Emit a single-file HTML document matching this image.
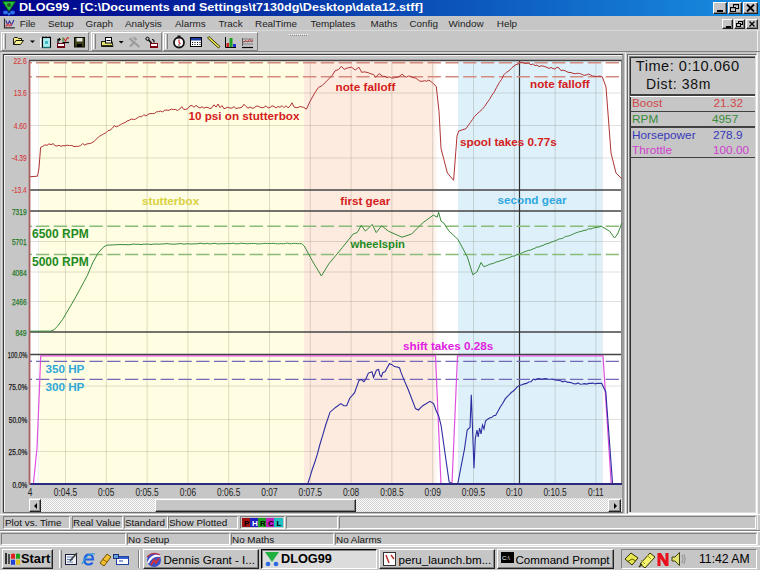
<!DOCTYPE html>
<html><head><meta charset="utf-8">
<style>
*{box-sizing:border-box}
html,body{margin:0;padding:0;width:760px;height:570px;overflow:hidden;background:#c6c6c6;font-family:"Liberation Sans",sans-serif;}
.a{position:absolute}
.t{position:absolute;white-space:pre;line-height:1}
.menu{font-size:9.9px;color:#222;top:19px}
.btn{position:absolute;background:#c6c6c6;border-top:1px solid #fff;border-left:1px solid #fff;border-right:1px solid #222;border-bottom:1px solid #222;box-shadow:inset -1px -1px 0 #808080}
.sunk{position:absolute;border-top:1px solid #808080;border-left:1px solid #808080;border-right:1px solid #fff;border-bottom:1px solid #fff}
.st{font-size:9.9px;color:#111}
svg text{font-family:"Liberation Sans",sans-serif}
</style></head><body>
<div class="a" style="left:0;top:0;width:760px;height:16px;background:linear-gradient(90deg,#00008a 0%,#0638a8 40%,#188ee0 100%)"></div>
<div class="t" style="left:19px;top:2px;font-size:11.8px;font-weight:bold;color:#fff;transform:scaleX(1.064);transform-origin:0 0">DLOG99 - [C:\Documents and Settings\t7130dg\Desktop\data12.stff]</div>
<svg class="a" style="left:1px;top:0px" width="16" height="16" viewBox="0 0 16 16"><path d="M1.5 1.5H14.5L8 11.5Z" fill="#22c23a" stroke="#0a5a1a" stroke-width="1"/><circle cx="8" cy="5" r="2" fill="#2a5a2a"/><ellipse cx="4.5" cy="12.5" rx="2.5" ry="2" fill="#2a70e8"/><ellipse cx="11.5" cy="12.5" rx="2.5" ry="2" fill="#2a70e8"/><circle cx="8" cy="14" r="1.5" fill="#2a70e8"/></svg>
<div class="btn" style="left:713px;top:2px;width:14px;height:12px"><div class="a" style="left:3px;top:7px;width:6px;height:2px;background:#000"></div></div>
<div class="btn" style="left:728px;top:2px;width:14px;height:12px"><svg class="a" style="left:0;top:0" width="12" height="10"><rect x="4.5" y="1.5" width="5" height="4" fill="none" stroke="#000"/><path d="M4 1h6v1.2h-6z" fill="#000"/><rect x="1.5" y="4.5" width="5" height="4" fill="#c6c6c6" stroke="#000"/><path d="M1 4h6v1.2h-6z" fill="#000"/></svg></div>
<div class="btn" style="left:743px;top:2px;width:15px;height:12px"><svg class="a" style="left:0;top:0" width="13" height="10"><path d="M3 1.5l7 7M10 1.5l-7 7" stroke="#000" stroke-width="1.8"/></svg></div>
<!-- menu -->
<svg class="a" style="left:0;top:16px" width="18" height="14" viewBox="0 16 18 14"><path d="M4.5 18.5V27.8H14.8" stroke="#303030" stroke-width="1.2" fill="none"/><path d="M6 20.5l1.5 4.5 2-4 2 4 2.5-5" stroke="#3038a8" stroke-width="1.2" fill="none"/><path d="M5.8 26.5l2-2.5 1.8 2 2-2.5" stroke="#e04848" stroke-width="1.3" fill="none"/></svg>
<div class="t menu" style="left:19.7px">File</div>
<div class="t menu" style="left:48px">Setup</div>
<div class="t menu" style="left:85.5px">Graph</div>
<div class="t menu" style="left:125px">Analysis</div>
<div class="t menu" style="left:175px">Alarms</div>
<div class="t menu" style="left:218.4px">Track</div>
<div class="t menu" style="left:255px">RealTime</div>
<div class="t menu" style="left:310.5px">Templates</div>
<div class="t menu" style="left:370.5px">Maths</div>
<div class="t menu" style="left:409.4px">Config</div>
<div class="t menu" style="left:448.5px">Window</div>
<div class="t menu" style="left:496.8px">Help</div>
<div class="btn" style="left:722px;top:19px;width:11px;height:10px"><div class="a" style="left:3px;top:6px;width:5px;height:2px;background:#000"></div></div>
<div class="btn" style="left:734px;top:19px;width:11px;height:10px"><svg class="a" style="left:0;top:0" width="9" height="8"><rect x="3.5" y="1.5" width="4" height="3" fill="none" stroke="#000"/><path d="M3 1h5v1h-5z" fill="#000"/><rect x="1.5" y="3.5" width="4" height="3" fill="#c6c6c6" stroke="#000"/><path d="M1 3h5v1h-5z" fill="#000"/></svg></div>
<div class="btn" style="left:746px;top:19px;width:12px;height:10px"><svg class="a" style="left:0;top:0" width="10" height="8"><path d="M2.5 1.5l5 5M7.5 1.5l-5 5" stroke="#000" stroke-width="1.3"/></svg></div>
<!-- toolbar -->
<div class="a" style="left:0;top:30px;width:760px;height:1px;background:#d8d8d8"></div><div class="a" style="left:757px;top:30px;width:1px;height:516px;background:#f0f0f0"></div><svg class="a" style="left:289px;top:33px" width="19" height="3"><path d="M0 1.5h19" stroke="#f4f4f4" stroke-dasharray="1 1"/><path d="M1 2.5h18" stroke="#909090" stroke-dasharray="1 1"/></svg>
<div class="a" style="left:0;top:51px;width:760px;height:1px;background:#808080"></div>
<div class="a" style="left:1px;top:32px;width:88px;height:19px;border-top:1px solid #fff;border-left:1px solid #fff;border-right:1px solid #808080;border-bottom:1px solid #808080"></div>
<div class="a" style="left:91px;top:32px;width:71px;height:19px;border-top:1px solid #fff;border-left:1px solid #fff;border-right:1px solid #808080;border-bottom:1px solid #808080"></div>
<div class="a" style="left:163px;top:32px;width:95px;height:19px;border-top:1px solid #fff;border-left:1px solid #fff;border-right:1px solid #808080;border-bottom:1px solid #808080"></div>
<div class="a" style="left:3px;top:34px;width:3px;height:15px;border-left:1px solid #fff;border-right:1px solid #808080"></div>
<div class="a" style="left:93px;top:34px;width:3px;height:15px;border-left:1px solid #fff;border-right:1px solid #808080"></div>
<div class="a" style="left:165px;top:34px;width:3px;height:15px;border-left:1px solid #fff;border-right:1px solid #808080"></div>
<svg class="a" style="left:0;top:30px" width="260" height="22" viewBox="0 30 260 22">
 <path d="M13.5 44.5v-6l1-1h3l1 1h3v2.5" fill="#f4ec80" stroke="#000" stroke-width="0.9"/><path d="M13.5 44.5l2.5-4h7.5l-3 4z" fill="#f8f490" stroke="#000" stroke-width="0.9"/>
 <path d="M30 40.5h5l-2.5 2.5z" fill="#000"/>
 <path d="M40.5 38v9" stroke="#fff"/><rect x="42.5" y="37.5" width="8" height="10" fill="#a8eef0" stroke="#000" stroke-width="1.1"/><path d="M42.5 47.5h8" stroke="#1c7070" stroke-width="1.2"/><path d="M43 36.5v1.5M46 36.5v1.5M49.5 36.5v1.5" stroke="#000" stroke-width="1.4"/><rect x="45" y="41" width="3" height="3" fill="#40b8c0"/>
 <rect x="57.5" y="43.5" width="7" height="4" fill="#fff" stroke="#700010"/><rect x="58" y="46" width="6" height="1.5" fill="#700010"/><path d="M58 43V39.5h2" stroke="#000" stroke-width="1.3" fill="none"/><path d="M59 37.5l2 2-2 1.5z" fill="#000"/><path d="M62.5 42.5h6.5" stroke="#000" stroke-width="1.2"/><path d="M63 41.5v-4" stroke="#40a040" stroke-width="1.5"/><path d="M63.5 38l2 3 2-3.5 1.5 1" stroke="#d03030" fill="none" stroke-width="1.1"/>
 <rect x="74.5" y="37.5" width="10" height="9.5" fill="#404018" stroke="#101000"/><rect x="76.5" y="38" width="6" height="3.5" fill="#e4e4e4"/><rect x="77" y="44" width="5" height="3" fill="#000"/>
 <path d="M101.5 41.5h10.5l1 5h-11.5z" fill="#e8e470" stroke="#000" stroke-width="0.9"/><rect x="105.5" y="37.5" width="6" height="5.5" fill="#fff" stroke="#000"/><path d="M106.5 40.5h4" stroke="#000"/><path d="M102 45.5h10" stroke="#000" stroke-width="0.8"/>
 <path d="M118.7 41h5l-2.5 2.5z" fill="#000"/>
 <path d="M129.5 38.5l10 8.5M130 46.5l5-5M134 37.5l2.5 2.5" stroke="#9a9a9a" stroke-width="2"/><path d="M131 37l3 3" stroke="#b8b8b8" stroke-width="2"/>
 <circle cx="147.5" cy="38.8" r="1.6" fill="none" stroke="#000" stroke-width="1"/><path d="M148.5 40l3 3" stroke="#000" stroke-width="1.4"/><path d="M152 39.5q2.5 0 2 3" stroke="#000" stroke-width="1.2" fill="none"/><rect x="150.5" y="43.5" width="7" height="4" fill="#fff" stroke="#800010"/><rect x="151" y="46" width="6" height="1.5" fill="#800010"/>
 <circle cx="179" cy="42.5" r="5" fill="#fff" stroke="#111" stroke-width="1.8"/><path d="M179 42.5v-3M179 42.5l1.5 1.5" stroke="#d02020" stroke-width="1.2"/><rect x="177.5" y="35.5" width="3" height="1.8" fill="#111"/><circle cx="179" cy="45" r="0.7" fill="#000"/>
 <rect x="190.5" y="37.5" width="11" height="9" fill="#fff" stroke="#000"/><rect x="191" y="38" width="10" height="2.5" fill="#1a3aa0"/><path d="M192 42.5h1M194.5 42.5h1M197 42.5h1M199.5 42.5h1M192 44.5h1M194.5 44.5h1M197 44.5h1M199.5 44.5h1" stroke="#000" stroke-width="1.2"/>
 <path d="M207.5 38l1.5-1.5 11 10-1.5 1.5z" fill="#f0ec40" stroke="#202000" stroke-width="0.9"/>
 <path d="M225.5 37v10.5h10.5" stroke="#000" fill="none"/><rect x="226.5" y="43" width="2.5" height="4" fill="#d02020"/><rect x="229.5" y="38" width="3" height="9" fill="#20a020"/><rect x="233" y="44" width="3" height="3" fill="#2030d0"/>
 <path d="M242 47.5h11" stroke="#000" stroke-width="1.2"/><path d="M242.5 38v8" stroke="#404040" stroke-width="0.8"/><path d="M243 39h10M243 41.5h10M243 44h10" stroke="#707070" stroke-width="0.8"/><path d="M243.5 42.5l2-2 2 1.5 2-2.5 2 1.5 1.5-1" stroke="#d03030" fill="none" stroke-width="0.9"/>
</svg>
<svg class="a" style="left:0;top:0" width="760" height="570" viewBox="0 0 760 570">
<path d="M1.5 514V52.5H626" fill="none" stroke="#dadada" stroke-width="1"/>
<path d="M3.5 512.5V54.5H623" fill="none" stroke="#3a3a3a" stroke-width="1.2"/>
<path d="M4.5 512V55.5H622.5" fill="none" stroke="#f4f4f4" stroke-width="1"/>
<path d="M3 512.5H623V54.5" fill="none" stroke="#707070" stroke-width="1"/>
<path d="M2 514.5H625.5V53" fill="none" stroke="#f8f8f8" stroke-width="1"/>
<defs><linearGradient id="wy" x1="0" x2="1"><stop offset="0" stop-color="#fff"/><stop offset="1" stop-color="#fffde2"/></linearGradient></defs>
<rect x="29" y="61" width="9.5" height="423" fill="#fff"/>
<rect x="38.5" y="61" width="2.5" height="423" fill="url(#wy)"/>
<rect x="41" y="61" width="263" height="423" fill="#fffde2"/>
<defs><linearGradient id="pw" x1="0" x2="1"><stop offset="0" stop-color="#fdebdf"/><stop offset="1" stop-color="#fff"/></linearGradient></defs>
<rect x="304" y="61" width="128.5" height="423" fill="#fdebdf"/>
<rect x="432.5" y="61" width="25.5" height="423" fill="#ffffff"/>
<rect x="432.5" y="61" width="5.5" height="423" fill="url(#pw)"/>
<rect x="458" y="61" width="144.5" height="423" fill="#def0fa"/>
<rect x="602.5" y="61" width="19.5" height="423" fill="#ffffff"/>
<line x1="65.5" y1="61" x2="65.5" y2="484" stroke="rgba(70,60,30,0.17)" stroke-width="1"/>
<line x1="106.3" y1="61" x2="106.3" y2="484" stroke="rgba(70,60,30,0.17)" stroke-width="1"/>
<line x1="147.1" y1="61" x2="147.1" y2="484" stroke="rgba(70,60,30,0.17)" stroke-width="1"/>
<line x1="187.9" y1="61" x2="187.9" y2="484" stroke="rgba(70,60,30,0.17)" stroke-width="1"/>
<line x1="228.7" y1="61" x2="228.7" y2="484" stroke="rgba(70,60,30,0.17)" stroke-width="1"/>
<line x1="269.5" y1="61" x2="269.5" y2="484" stroke="rgba(70,60,30,0.17)" stroke-width="1"/>
<line x1="310.3" y1="61" x2="310.3" y2="484" stroke="rgba(70,60,30,0.17)" stroke-width="1"/>
<line x1="351.1" y1="61" x2="351.1" y2="484" stroke="rgba(70,60,30,0.17)" stroke-width="1"/>
<line x1="391.9" y1="61" x2="391.9" y2="484" stroke="rgba(70,60,30,0.17)" stroke-width="1"/>
<line x1="432.7" y1="61" x2="432.7" y2="484" stroke="rgba(70,60,30,0.17)" stroke-width="1"/>
<line x1="473.5" y1="61" x2="473.5" y2="484" stroke="rgba(70,60,30,0.17)" stroke-width="1"/>
<line x1="514.3" y1="61" x2="514.3" y2="484" stroke="rgba(70,60,30,0.17)" stroke-width="1"/>
<line x1="555.1" y1="61" x2="555.1" y2="484" stroke="rgba(70,60,30,0.17)" stroke-width="1"/>
<line x1="595.9" y1="61" x2="595.9" y2="484" stroke="rgba(70,60,30,0.17)" stroke-width="1"/>
<line x1="29" y1="93" x2="622" y2="93" stroke="rgba(70,60,30,0.16)" stroke-width="1"/>
<line x1="29" y1="125.5" x2="622" y2="125.5" stroke="rgba(70,60,30,0.16)" stroke-width="1"/>
<line x1="29" y1="158" x2="622" y2="158" stroke="rgba(70,60,30,0.16)" stroke-width="1"/>
<line x1="29" y1="241.5" x2="622" y2="241.5" stroke="rgba(70,60,30,0.16)" stroke-width="1"/>
<line x1="29" y1="272" x2="622" y2="272" stroke="rgba(70,60,30,0.16)" stroke-width="1"/>
<line x1="29" y1="301.5" x2="622" y2="301.5" stroke="rgba(70,60,30,0.16)" stroke-width="1"/>
<line x1="29" y1="386" x2="622" y2="386" stroke="rgba(70,60,30,0.16)" stroke-width="1"/>
<line x1="29" y1="419.5" x2="622" y2="419.5" stroke="rgba(70,60,30,0.16)" stroke-width="1"/>
<line x1="29" y1="451.5" x2="622" y2="451.5" stroke="rgba(70,60,30,0.16)" stroke-width="1"/>
<line x1="29" y1="60.6" x2="622" y2="60.6" stroke="#444" stroke-width="1.5"/>
<line x1="29" y1="190" x2="622" y2="190" stroke="#444" stroke-width="1.5"/>
<line x1="29" y1="211" x2="622" y2="211" stroke="#444" stroke-width="1.5"/>
<line x1="29" y1="332" x2="622" y2="332" stroke="#444" stroke-width="1.5"/>
<line x1="29" y1="354.5" x2="622" y2="354.5" stroke="#444" stroke-width="1.5"/>
<line x1="621.5" y1="60.6" x2="621.5" y2="484" stroke="#8a8a8a" stroke-width="1"/>
<line x1="519.5" y1="61" x2="519.5" y2="484" stroke="#303030" stroke-width="1.2"/>
<g stroke-dasharray="13.3 4.5" stroke-width="1.45" fill="none">
<line x1="36" y1="62.7" x2="622" y2="62.7" stroke="#d58a80"/>
<line x1="36" y1="76.8" x2="622" y2="76.8" stroke="#d58a80"/>
<line x1="36" y1="226.3" x2="622" y2="226.3" stroke="#88bc78"/>
<line x1="36" y1="254.4" x2="622" y2="254.4" stroke="#88bc78"/>
<line x1="36" y1="361.3" x2="622" y2="361.3" stroke="#7468b8" stroke-width="1.3"/>
<line x1="36" y1="379.3" x2="622" y2="379.3" stroke="#7468b8" stroke-width="1.3"/>
</g>
<line x1="29" y1="62.7" x2="32" y2="62.7" stroke="#d58a80" stroke-width="1.4"/>
<line x1="29" y1="76.8" x2="32" y2="76.8" stroke="#d58a80" stroke-width="1.4"/>
<line x1="29" y1="226.3" x2="32" y2="226.3" stroke="#88bc78" stroke-width="1.4"/>
<line x1="29" y1="254.4" x2="32" y2="254.4" stroke="#88bc78" stroke-width="1.4"/>
<line x1="29" y1="361.3" x2="32" y2="361.3" stroke="#7468b8" stroke-width="1.4"/>
<line x1="29" y1="379.3" x2="32" y2="379.3" stroke="#7468b8" stroke-width="1.4"/>
<polyline points="29.0,176.8 37.5,176.2 39.0,168.0 40.6,147.4 42.7,146.4 44.9,144.9 47.0,145.3 49.0,143.8 51.0,144.7 53.0,143.6 55.0,145.5 57.0,146.1 59.0,145.2 61.0,146.4 63.0,145.6 65.0,145.8 67.2,145.2 69.5,145.6 71.8,145.4 74.0,146.6 76.2,146.3 78.5,146.3 80.6,145.6 82.7,143.6 84.8,145.0 87.0,143.9 89.1,143.6 91.2,143.2 94.1,141.4 97.0,138.5 99.3,136.4 101.5,135.3 103.8,133.7 105.9,132.8 108.0,130.6 110.1,130.2 112.2,128.4 114.3,125.7 116.4,126.8 118.5,125.9 120.7,124.5 122.8,123.3 124.9,122.7 127.0,121.0 129.1,120.4 131.2,119.0 133.3,119.5 135.4,119.2 137.5,117.8 139.6,116.5 141.7,116.8 143.8,114.6 145.9,116.0 148.0,114.4 150.1,113.5 152.2,113.6 154.3,113.5 156.4,111.9 158.5,111.6 160.6,111.1 162.7,111.9 164.8,110.2 166.9,110.1 169.1,110.4 171.2,109.1 173.3,109.5 175.4,109.5 177.5,110.5 179.6,109.2 181.7,106.7 183.8,109.5 185.9,109.4 188.0,108.4 190.0,105.8 192.0,105.5 194.0,107.3 196.0,105.4 198.0,107.0 200.0,108.0 202.0,106.7 204.0,108.2 206.0,107.2 208.0,107.5 210.0,108.7 212.0,107.7 214.0,104.8 216.0,107.1 218.0,104.0 220.0,107.7 222.0,105.5 224.0,108.8 226.0,108.0 228.0,107.1 230.0,108.1 232.0,108.1 234.0,106.6 236.0,108.5 238.0,108.0 240.0,107.8 242.0,107.2 244.0,104.2 246.0,106.5 248.0,108.2 250.0,107.0 252.0,108.1 254.0,108.1 256.0,106.2 258.0,106.1 260.0,107.2 262.0,107.8 264.0,107.3 266.0,105.8 268.0,107.9 270.0,107.5 272.0,105.9 274.0,106.3 276.0,108.0 278.0,106.5 280.0,107.3 282.0,105.7 284.0,107.7 286.0,105.7 288.0,107.9 290.0,106.2 292.0,102.8 294.0,106.9 296.0,107.7 298.0,107.5 300.0,106.5 303.7,107.4 306.4,109.2 310.1,101.3 314.7,93.0 318.4,87.5 322.1,85.6 327.6,80.1 332.2,75.5 335.0,70.9 338.7,69.4 341.4,66.3 344.2,69.4 347.0,68.1 351.6,67.2 355.2,70.0 358.9,67.2 361.7,72.4 363.8,71.9 366.0,72.1 368.1,72.7 370.9,73.8 373.7,74.6 375.5,77.3 379.2,73.7 382.9,76.4 385.0,76.4 387.2,77.6 389.4,76.8 391.5,77.9 393.6,78.1 395.8,77.3 397.9,77.2 400.0,76.0 402.1,74.1 404.2,76.1 406.3,77.2 408.4,76.1 410.5,76.4 412.8,77.7 415.1,77.8 417.4,79.3 419.7,81.0 422.0,81.4 424.3,80.7 426.6,81.2 428.9,80.1 432.6,82.9 436.3,86.5 439.0,111.4 441.0,148.4 447.4,173.0 453.6,180.3 457.0,136.0 458.7,131.0 466.0,128.7 468.1,125.7 470.3,122.6 472.5,119.4 474.6,116.4 477.1,113.9 479.6,111.7 482.0,109.5 484.5,106.6 486.9,103.0 489.4,99.6 491.9,95.2 494.3,91.9 496.7,87.2 499.1,82.9 501.6,79.3 504.0,74.7 506.0,72.6 508.0,71.4 510.0,69.9 512.0,67.5 514.0,66.0 516.0,64.7 518.0,64.1 520.0,62.4 522.2,62.3 524.4,63.4 526.6,63.3 528.8,63.2 531.0,64.8 533.0,63.8 535.0,65.7 537.0,65.0 539.0,66.7 541.0,65.8 543.0,66.0 545.0,66.7 547.0,67.4 549.0,68.4 551.0,67.5 553.0,68.5 555.0,69.1 557.0,67.1 559.0,67.9 561.0,70.7 563.0,70.2 565.0,70.7 567.0,71.8 569.0,72.5 571.0,72.5 573.0,73.4 575.2,73.7 577.4,73.3 579.5,73.5 581.7,74.2 583.9,75.3 586.1,75.1 588.2,74.0 590.4,74.8 592.6,76.0 595.0,76.3 597.5,76.5 600.0,76.0 602.4,77.0 606.0,87.0 611.0,153.0 616.0,173.0 622.0,179.0" fill="none" stroke="#b03434" stroke-width="1"/>
<polyline points="29.0,331.2 50.5,331.1 54.0,329.8 57.5,326.2 62.8,319.2 75.1,298.2 87.4,275.4 92.6,263.0 97.9,253.4 103.2,247.3 106.7,245.2 119.0,244.6 121.0,244.5 123.0,244.7 125.0,244.5 127.0,244.8 129.0,244.7 131.0,244.5 133.0,244.1 135.0,244.2 137.0,244.3 139.0,244.2 141.0,244.6 143.0,244.2 145.0,244.2 147.0,244.1 149.0,244.2 151.0,244.5 153.0,244.1 155.0,244.1 157.0,244.0 159.0,244.2 161.0,244.0 163.0,243.9 165.0,243.9 167.0,243.5 169.0,243.9 171.0,244.1 173.0,244.1 175.0,244.2 177.0,243.9 179.0,243.8 181.0,243.5 183.0,244.1 185.0,244.0 187.0,243.7 189.0,243.9 191.0,244.0 193.0,243.9 195.0,243.8 197.0,243.9 199.0,243.4 201.0,243.2 203.0,243.8 205.0,243.8 207.1,243.3 209.1,243.9 211.1,243.8 213.1,243.5 215.1,243.3 217.1,243.9 219.1,243.9 221.1,243.7 223.1,243.7 225.1,243.8 227.2,243.5 229.2,243.6 231.2,243.6 233.2,243.1 235.2,243.8 237.2,243.8 239.2,243.7 241.2,243.1 243.2,243.5 245.2,243.5 247.2,243.8 249.3,243.6 251.3,243.5 253.3,243.5 255.3,243.5 257.3,243.9 259.3,243.8 261.3,243.8 263.3,243.5 265.3,243.3 267.3,243.6 269.3,243.5 271.4,243.5 273.4,243.3 275.4,243.7 277.4,243.8 279.4,243.8 281.4,243.5 283.4,243.8 285.4,243.5 287.4,243.1 289.4,243.7 291.5,243.7 293.5,243.4 295.5,243.4 297.5,243.7 299.5,243.7 301.5,243.5 304.3,246.0 312.4,261.0 321.4,276.0 328.7,264.0 342.3,247.6 353.2,234.0 357.2,232.6 361.3,225.3 365.4,231.2 372.2,224.4 376.2,232.6 381.7,225.8 388.5,231.2 402.0,237.2 411.6,234.0 422.5,223.0 433.3,215.1 437.2,217.2 438.6,212.3 441.0,221.0 443.9,223.2 448.8,230.9 457.9,239.3 467.4,257.0 472.8,274.8 476.9,272.0 481.0,262.5 483.7,266.6 485.7,266.1 487.8,265.2 489.8,264.2 491.9,263.8 493.9,263.2 495.9,262.1 498.0,261.5 500.0,261.0 502.1,260.2 504.1,259.7 506.2,258.6 508.2,257.9 510.3,257.2 512.3,256.3 514.4,256.0 516.4,254.9 518.5,254.3 520.5,253.8 522.6,252.6 524.6,251.8 526.7,251.0 528.7,250.4 530.7,250.0 532.8,249.0 534.8,248.3 536.9,247.0 538.9,247.0 540.9,246.0 543.0,245.5 545.0,244.3 547.0,243.7 549.1,243.2 551.1,242.1 553.2,241.6 555.2,240.7 557.2,239.9 559.3,238.9 561.3,238.7 563.4,237.9 565.4,236.4 567.5,236.2 569.5,235.7 571.5,234.8 573.6,233.9 575.6,232.9 577.7,232.3 579.7,231.7 581.9,231.2 584.0,230.4 586.2,230.2 588.4,228.8 590.5,229.0 592.7,228.3 594.9,227.6 597.1,227.4 599.2,226.9 601.4,226.3 609.6,231.2 614.5,238.0 617.7,234.0 621.8,223.0" fill="none" stroke="#3a8a3a" stroke-width="1"/>
<polyline points="29,484 33.4,484 37,448 39.5,387 40.7,355.8 435.5,355.8 441,484 452,484 457.5,355.8 603,355.8 611.2,484 622,484" fill="none" stroke="#e050e0" stroke-width="1.2"/>
<polyline points="29.0,484.0 307.7,484.0 310.1,476.6 312.4,469.0 314.8,462.3 317.2,454.7 319.9,444.5 322.6,435.6 326.0,424.0 328.0,418.3 330.0,412.2 335.8,407.2 340.9,403.6 343.8,405.7 346.7,405.7 349.6,398.5 354.6,392.7 359.0,380.4 361.2,379.6 364.0,381.8 366.2,378.2 368.4,373.1 372.0,371.7 373.5,377.5 376.4,370.2 378.6,369.5 380.0,375.3 381.4,376.7 382.9,372.4 385.0,371.7 389.4,363.7 391.6,364.4 394.5,366.6 398.1,367.3 399.6,368.0 401.0,372.4 403.9,379.6 408.3,389.8 415.5,408.6 418.4,410.0 422.8,405.7 430.0,401.4 433.6,403.6 436.5,411.5 438.7,415.9 441.0,425.0 449.1,481.9 453.2,484.0 457.7,484.0 464.5,449.0 467.2,430.0 470.0,427.4 471.3,394.8 474.0,468.2 475.3,438.3 477.0,430.0 478.2,437.0 479.6,428.0 481.0,434.0 482.5,425.0 484.0,429.0 485.5,421.0 487.6,419.2 489.6,418.0 491.6,417.6 493.7,415.7 495.7,415.2 498.1,411.0 500.4,406.7 502.8,403.2 505.2,398.9 507.2,396.6 509.3,394.6 511.3,392.5 513.3,391.0 515.4,389.1 517.4,386.6 519.7,385.4 521.9,384.7 524.2,383.9 526.5,383.4 528.7,382.0 531.0,381.7 533.3,379.1 535.5,379.8 537.8,378.5 539.8,378.9 541.9,379.3 543.9,378.7 546.0,378.5 548.0,379.2 550.0,379.3 552.1,379.1 554.1,379.8 556.3,380.1 558.5,380.2 560.6,380.7 562.8,381.8 565.0,381.0 567.2,382.1 569.4,382.4 571.5,382.7 573.7,383.8 575.9,383.9 578.0,382.9 580.2,384.2 582.4,384.0 584.5,383.6 586.6,384.1 588.8,383.4 591.0,383.4 593.1,383.1 595.2,383.9 597.4,383.3 599.6,383.4 601.7,383.4 605.8,392.0 612.6,484.0 622.0,484.0" fill="none" stroke="#2c2ca0" stroke-width="1.1"/>
<line x1="29" y1="484" x2="622" y2="484" stroke="#2a2a80" stroke-width="2"/>
<line x1="29.5" y1="61" x2="29.5" y2="485" stroke="#a86060" stroke-width="1.8"/>
<text x="13.5" y="64.3" fill="#d83838" stroke="#d83838" stroke-width="0.1" font-size="8.5" textLength="13.2" lengthAdjust="spacingAndGlyphs">22.6</text>
<text x="13.7" y="96.3" fill="#d83838" stroke="#d83838" stroke-width="0.1" font-size="8.5" textLength="13" lengthAdjust="spacingAndGlyphs">13.6</text>
<text x="13.7" y="128.8" fill="#d83838" stroke="#d83838" stroke-width="0.1" font-size="8.5" textLength="13" lengthAdjust="spacingAndGlyphs">4.60</text>
<text x="11.7" y="161.3" fill="#d83838" stroke="#d83838" stroke-width="0.1" font-size="8.5" textLength="15" lengthAdjust="spacingAndGlyphs">-4.39</text>
<text x="11.7" y="193.3" fill="#d83838" stroke="#d83838" stroke-width="0.1" font-size="8.5" textLength="15" lengthAdjust="spacingAndGlyphs">-13.4</text>
<text x="11.900000000000002" y="214.8" fill="#287a28" stroke="#287a28" stroke-width="0.25" font-size="8.5" textLength="14.7" lengthAdjust="spacingAndGlyphs">7319</text>
<text x="11.900000000000002" y="245.3" fill="#287a28" stroke="#287a28" stroke-width="0.25" font-size="8.5" textLength="14.7" lengthAdjust="spacingAndGlyphs">5701</text>
<text x="11.900000000000002" y="275.8" fill="#287a28" stroke="#287a28" stroke-width="0.25" font-size="8.5" textLength="14.7" lengthAdjust="spacingAndGlyphs">4084</text>
<text x="11.900000000000002" y="305.3" fill="#287a28" stroke="#287a28" stroke-width="0.25" font-size="8.5" textLength="14.7" lengthAdjust="spacingAndGlyphs">2466</text>
<text x="15.400000000000002" y="335.8" fill="#287a28" stroke="#287a28" stroke-width="0.25" font-size="8.5" textLength="11.2" lengthAdjust="spacingAndGlyphs">849</text>
<text x="7.800000000000001" y="358.0" fill="#202020" stroke="#202020" stroke-width="0.25" font-size="8.5" textLength="19.5" lengthAdjust="spacingAndGlyphs">100.0%</text>
<text x="8.5" y="389.5" fill="#202020" stroke="#202020" stroke-width="0.25" font-size="8.5" textLength="18.8" lengthAdjust="spacingAndGlyphs">75.0%</text>
<text x="8.8" y="423.0" fill="#202020" stroke="#202020" stroke-width="0.25" font-size="8.5" textLength="18.5" lengthAdjust="spacingAndGlyphs">50.0%</text>
<text x="8.600000000000001" y="455.0" fill="#202020" stroke="#202020" stroke-width="0.25" font-size="8.5" textLength="18.7" lengthAdjust="spacingAndGlyphs">25.0%</text>
<text x="12.5" y="487.5" fill="#202020" stroke="#202020" stroke-width="0.25" font-size="8.5" textLength="14.8" lengthAdjust="spacingAndGlyphs">0.0%</text>
<text x="30" y="496.3" text-anchor="middle" fill="#222" font-size="10.5" transform="translate(30,0) scale(0.8,1) translate(-30,0)">4</text>
<text x="65.5" y="496.3" text-anchor="middle" fill="#222" font-size="10.5" transform="translate(65.5,0) scale(0.8,1) translate(-65.5,0)">0:04.5</text>
<text x="106.3" y="496.3" text-anchor="middle" fill="#222" font-size="10.5" transform="translate(106.3,0) scale(0.8,1) translate(-106.3,0)">0:05</text>
<text x="147.1" y="496.3" text-anchor="middle" fill="#222" font-size="10.5" transform="translate(147.1,0) scale(0.8,1) translate(-147.1,0)">0:05.5</text>
<text x="187.9" y="496.3" text-anchor="middle" fill="#222" font-size="10.5" transform="translate(187.9,0) scale(0.8,1) translate(-187.9,0)">0:06</text>
<text x="228.7" y="496.3" text-anchor="middle" fill="#222" font-size="10.5" transform="translate(228.7,0) scale(0.8,1) translate(-228.7,0)">0:06.5</text>
<text x="269.5" y="496.3" text-anchor="middle" fill="#222" font-size="10.5" transform="translate(269.5,0) scale(0.8,1) translate(-269.5,0)">0:07</text>
<text x="310.3" y="496.3" text-anchor="middle" fill="#222" font-size="10.5" transform="translate(310.3,0) scale(0.8,1) translate(-310.3,0)">0:07.5</text>
<text x="351.1" y="496.3" text-anchor="middle" fill="#222" font-size="10.5" transform="translate(351.1,0) scale(0.8,1) translate(-351.1,0)">0:08</text>
<text x="391.9" y="496.3" text-anchor="middle" fill="#222" font-size="10.5" transform="translate(391.9,0) scale(0.8,1) translate(-391.9,0)">0:08.5</text>
<text x="432.7" y="496.3" text-anchor="middle" fill="#222" font-size="10.5" transform="translate(432.7,0) scale(0.8,1) translate(-432.7,0)">0:09</text>
<text x="473.5" y="496.3" text-anchor="middle" fill="#222" font-size="10.5" transform="translate(473.5,0) scale(0.8,1) translate(-473.5,0)">0:09.5</text>
<text x="514.3" y="496.3" text-anchor="middle" fill="#222" font-size="10.5" transform="translate(514.3,0) scale(0.8,1) translate(-514.3,0)">0:10</text>
<text x="555.1" y="496.3" text-anchor="middle" fill="#222" font-size="10.5" transform="translate(555.1,0) scale(0.8,1) translate(-555.1,0)">0:10.5</text>
<text x="595.9" y="496.3" text-anchor="middle" fill="#222" font-size="10.5" transform="translate(595.9,0) scale(0.8,1) translate(-595.9,0)">0:11</text>
<text x="188.4" y="120" fill="#d42020" font-size="11.7" font-weight="bold">10 psi on stutterbox</text>
<text x="335.6" y="90.6" fill="#d42020" font-size="11.7" font-weight="bold">note falloff</text>
<text x="530" y="88" fill="#d42020" font-size="11.7" font-weight="bold">note falloff</text>
<text x="460" y="146" fill="#d42020" font-size="11.7" font-weight="bold">spool takes 0.77s</text>
<text x="142" y="205" fill="#d8d040" font-size="11.7" font-weight="bold">stutterbox</text>
<text x="340.3" y="205.4" fill="#d42020" font-size="11.7" font-weight="bold">first gear</text>
<text x="497.6" y="203.6" fill="#30a8e0" font-size="11.7" font-weight="bold">second gear</text>
<text x="32" y="237.5" fill="#1e8a1e" font-size="12" font-weight="bold">6500 RPM</text>
<text x="32" y="265.6" fill="#1e8a1e" font-size="12" font-weight="bold">5000 RPM</text>
<text x="350.4" y="247.6" fill="#1e8a1e" font-size="11.3" font-weight="bold">wheelspin</text>
<text x="403" y="350" fill="#e020e0" font-size="11.7" font-weight="bold">shift takes 0.28s</text>
<text x="45.4" y="373" fill="#30a8d8" font-size="11.7" font-weight="bold">350 HP</text>
<text x="45.4" y="390.8" fill="#30a8d8" font-size="11.7" font-weight="bold">300 HP</text>
<rect x="29" y="498.5" width="593" height="13" fill="#e6e6e6"/>
<defs><pattern id="dith" width="2" height="2" patternUnits="userSpaceOnUse"><rect width="2" height="2" fill="#fff"/><rect width="1" height="1" fill="#d0d0d0"/><rect x="1" y="1" width="1" height="1" fill="#d0d0d0"/></pattern></defs>
<rect x="29" y="498.5" width="593" height="13" fill="url(#dith)"/>
</svg>
<!-- scrollbar buttons & thumb -->
<div class="btn" style="left:29px;top:499px;width:12px;height:13px"><svg class="a" style="left:3px;top:3px" width="5" height="6"><path d="M4 0v6L1 3z" fill="#000"/></svg></div>
<div class="btn" style="left:155px;top:499px;width:201px;height:13px"></div>
<div class="btn" style="left:608px;top:499px;width:13px;height:13px"><svg class="a" style="left:4px;top:3px" width="5" height="6"><path d="M1 0v6L4 3z" fill="#000"/></svg></div>
<!-- right panel -->
<div class="a" style="left:627px;top:54px;width:130px;height:460px;border-top:1px solid #6a6a6a;border-left:1px solid #6a6a6a;border-right:1px solid #fff;border-bottom:1px solid #fff"></div>
<div class="a" style="left:628px;top:55px;width:128px;height:458px;border-top:1px solid #e4e4e4;border-left:1px solid #e4e4e4;border-right:1px solid #dcdcdc;border-bottom:1px solid #dcdcdc"></div>
<div class="a" style="left:629px;top:56px;width:126px;height:456px;border-top:1px solid #808080;border-left:1px solid #808080"></div>
<div class="a" style="left:630px;top:57px;width:125px;height:455px;border-top:1px solid #303030;border-left:1px solid #303030"></div>
<div class="t" style="left:635.8px;top:58.5px;font-size:14.6px;letter-spacing:0.5px;color:#111">Time: 0:10.060</div>
<div class="t" style="left:646px;top:76.5px;font-size:14px;letter-spacing:0.65px;color:#111">Dist: 38m</div>
<div class="a" style="left:630px;top:93.5px;width:125px;height:2px;background:#404040"></div>
<div class="a" style="left:630px;top:95.5px;width:125px;height:1px;background:#fff"></div>
<div class="a" style="left:630px;top:110.5px;width:125px;height:1.5px;background:#404040"></div>
<div class="a" style="left:630px;top:126px;width:125px;height:1.5px;background:#404040"></div>
<div class="a" style="left:630px;top:156.5px;width:125px;height:1.5px;background:#404040"></div>
<div class="t" style="left:632px;top:98px;font-size:11.8px;color:#d04848">Boost</div>
<div class="t" style="left:713.5px;top:98px;font-size:11.8px;color:#d04848">21.32</div>
<div class="t" style="left:632px;top:114.3px;font-size:11.8px;color:#3a8a3a">RPM</div>
<div class="t" style="left:712px;top:114.3px;font-size:11.8px;color:#3a8a3a">4957</div>
<div class="t" style="left:632px;top:129.5px;font-size:11.8px;color:#3838b8">Horsepower</div>
<div class="t" style="left:713px;top:129.5px;font-size:11.8px;color:#3838b8">278.9</div>
<div class="t" style="left:632px;top:144.5px;font-size:11.8px;color:#d040d0">Throttle</div>
<div class="t" style="left:713px;top:144.5px;font-size:11.8px;color:#d040d0">100.00</div>
<!-- status row 1 -->
<div class="a" style="left:0;top:514px;width:760px;height:1px;background:#fff"></div>
<div class="sunk" style="left:3px;top:516px;width:67px;height:13px"></div>
<div class="sunk" style="left:72px;top:516px;width:51px;height:13px"></div>
<div class="sunk" style="left:124px;top:516px;width:44px;height:13px"></div>
<div class="sunk" style="left:168px;top:516px;width:70px;height:13px"></div>
<div class="sunk" style="left:240px;top:516px;width:45px;height:13px"></div>
<div class="sunk" style="left:286px;top:516px;width:52px;height:13px"></div>
<div class="sunk" style="left:339px;top:516px;width:417px;height:13px"></div>
<div class="t st" style="left:5px;top:518px">Plot vs. Time</div>
<div class="t st" style="left:73px;top:518px">Real Value</div>
<div class="t st" style="left:125px;top:518px">Standard</div>
<div class="t st" style="left:169px;top:518px">Show Plotted</div>
<svg class="a" style="left:242px;top:517px" width="42" height="11"><rect x="0" y="1" width="8" height="9" fill="#a01010"/><rect x="8" y="1" width="8" height="9" fill="#2020c0"/><rect x="16" y="1" width="8" height="9" fill="#20a020"/><rect x="24" y="1" width="8" height="9" fill="#c020c0"/><rect x="32" y="1" width="9" height="9" fill="#20c0c0"/>
<text x="2" y="9" font-size="8" font-weight="bold" fill="#000">P</text><text x="10" y="9" font-size="8" font-weight="bold" fill="#fff">H</text><text x="18" y="9" font-size="8" font-weight="bold" fill="#000">R</text><text x="26" y="9" font-size="8" font-weight="bold" fill="#000">C</text><text x="34.5" y="9" font-size="8" font-weight="bold" fill="#000">L</text></svg>
<!-- status row 2 -->
<div class="a" style="left:0;top:530px;width:760px;height:1px;background:#808080"></div>
<div class="a" style="left:0;top:531px;width:760px;height:1px;background:#fff"></div>
<div class="sunk" style="left:1px;top:533px;width:125px;height:12px"></div>
<div class="sunk" style="left:127px;top:533px;width:103px;height:12px"></div>
<div class="sunk" style="left:231px;top:533px;width:103px;height:12px"></div>
<div class="sunk" style="left:335px;top:533px;width:422px;height:12px"></div>
<div class="t st" style="left:128px;top:535px">No Setup</div>
<div class="t st" style="left:232px;top:535px">No Maths</div>
<div class="t st" style="left:336px;top:535px">No Alarms</div>
<!-- taskbar -->
<div class="a" style="left:0;top:545px;width:760px;height:25px;background:#c6c6c6;border-top:1px solid #dfdfdf"></div>
<div class="a" style="left:0;top:546px;width:760px;height:1px;background:#fff"></div>
<div class="btn" style="left:2px;top:549px;width:51px;height:20px"></div>
<svg class="a" style="left:5px;top:552px" width="16" height="14"><rect x="0" y="1" width="2" height="11" fill="#303030"/><rect x="3" y="2" width="2" height="10" fill="#505050"/><path d="M6 2q3-1 4 0v5q-2-1-4 0z" fill="#e02020"/><path d="M11 2q2-1 4 0v5q-2-1-4 0z" fill="#20a020"/><path d="M6 8q3-1 4 0v5q-2-1-4 0z" fill="#2040e0"/><path d="M11 8q2-1 4 0v5q-2-1-4 0z" fill="#e0c020"/></svg>
<div class="t" style="left:21px;top:553px;font-size:12.8px;font-weight:bold;color:#000">Start</div>
<div class="a" style="left:59px;top:550px;width:3px;height:18px;border-left:1px solid #fff;border-right:1px solid #808080"></div>
<svg class="a" style="left:64px;top:550px" width="70" height="18">
 <rect x="1.5" y="4.5" width="11" height="10" fill="#f0f0f0" stroke="#202040"/><path d="M3 7h6M3 9.5h6M3 12h6" stroke="#6080c0"/><path d="M6 11l7-8" stroke="#404040" stroke-width="1.6"/>
 <path d="M21 9.5h8q0-5-4-5t-4.5 5t4.5 5q2.5 0 3.5-2" fill="none" stroke="#2060e0" stroke-width="2.2"/><path d="M18 14q6-12 13-10" stroke="#2a9ad8" fill="none" stroke-width="1.2"/>
 <path d="M36 13l7-9 4 3-7 9z" fill="#f0c030" stroke="#705000"/><path d="M38 9l5 3" stroke="#a06000"/>
 <rect x="52.5" y="6.5" width="12" height="8" fill="#fff" stroke="#2040a0"/><rect x="53" y="7" width="11" height="2" fill="#3060d0"/><path d="M55 11h4" stroke="#2040a0"/><rect x="49.5" y="4.5" width="5" height="4" fill="#60a0e0" stroke="#203070"/>
</svg>
<div class="a" style="left:138px;top:550px;width:2px;height:18px;border-left:1px solid #808080;border-right:1px solid #fff"></div>
<div class="btn" style="left:143px;top:549px;width:116px;height:20px"></div>
<svg class="a" style="left:145px;top:551px" width="17" height="17"><circle cx="9" cy="9" r="7" fill="#3a50c8"/><path d="M3 12q4-9 12-7" stroke="#fff" stroke-width="2" fill="none"/><path d="M6 14l3-5 2 3 3-5" stroke="#e03030" stroke-width="1.6" fill="none"/><path d="M2 6q6-6 13-2" stroke="#c03050" stroke-width="1.2" fill="none"/></svg>
<div class="t" style="left:163.5px;top:553.5px;font-size:11.6px;color:#000">Dennis Grant - I...</div>
<div class="a" style="left:261px;top:549px;width:116px;height:20px;background:#dcdcdc;border-top:1px solid #000;border-left:1px solid #000;border-right:1px solid #fff;border-bottom:1px solid #fff;box-shadow:inset 1px 1px 0 #808080"></div>
<svg class="a" style="left:264px;top:551px" width="16" height="16"><path d="M1 1H15L8 11Z" fill="#20b040"/><circle cx="4" cy="13" r="2.3" fill="#2a6ae0"/><circle cx="12" cy="13" r="2.3" fill="#2a6ae0"/></svg>
<div class="t" style="left:281px;top:553px;font-size:12.7px;font-weight:bold;color:#000">DLOG99</div>
<div class="btn" style="left:379px;top:549px;width:116px;height:20px"></div>
<svg class="a" style="left:382px;top:551px" width="16" height="16"><rect x="1.5" y="1.5" width="12" height="13" fill="#fff" stroke="#333"/><path d="M4 4l3 8M9 4l3 4" stroke="#c03030" stroke-width="1.5"/></svg>
<div class="t" style="left:398.5px;top:553.5px;font-size:11.6px;color:#000">peru_launch.bm...</div>
<div class="btn" style="left:497px;top:549px;width:117px;height:20px"></div>
<svg class="a" style="left:501px;top:552px" width="14" height="12"><rect x="0" y="0" width="13" height="11" fill="#000"/><text x="1" y="8" font-size="6" fill="#fff">C:\</text></svg>
<div class="t" style="left:515.5px;top:553.5px;font-size:11.6px;color:#000">Command Prompt</div>
<div class="sunk" style="left:621px;top:549px;width:136px;height:20px"></div>
<svg class="a" style="left:623px;top:550px" width="70" height="18">
 <path d="M2 9l6-6 7 5-6 7z" fill="#e8e850" stroke="#303000" stroke-width="1"/><path d="M4 12l5-3 4 2" stroke="#606000" fill="none"/>
 <path d="M17 14l10-11 5 4-10 11z" fill="#f4f470" stroke="#303000" stroke-width="1"/><path d="M18 10l4 4M24 5l4 4" stroke="#a0a020"/><path d="M16 17l3-3" stroke="#303000" stroke-width="1.5"/>
 <path d="M34.5 16V3h3.6l4.4 7.5V3h3v13h-3.4l-4.6-7.8V16z" fill="#e8101a"/>
 <path d="M49 7h3l4.5-4.5v13L52 11h-3z" fill="#e4e470" stroke="#303000" stroke-width="0.9"/><path d="M59 5q2 4 0 8M61 4q2.5 5 0 10" stroke="#909090" fill="none"/>
</svg>
<div class="t" style="left:699px;top:553px;font-size:12.2px;color:#000">11:42 AM</div>
</body></html>
